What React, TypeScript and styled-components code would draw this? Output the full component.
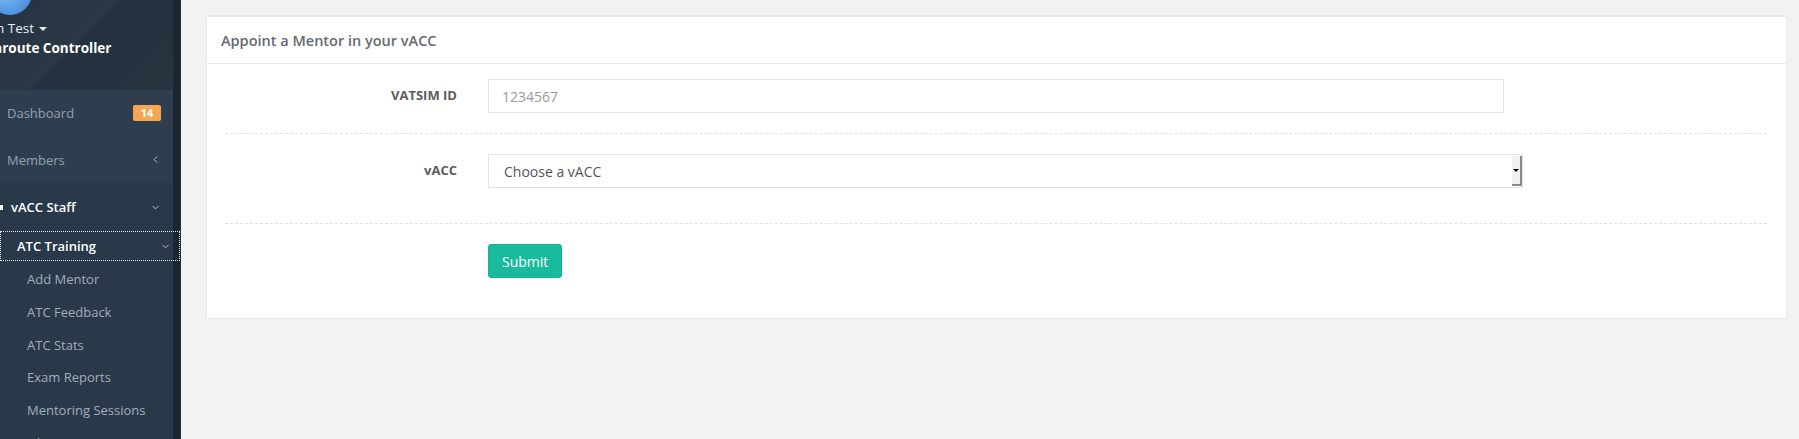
import React from "react";
import styled, { createGlobalStyle } from "styled-components";
import { FiChevronDown, FiChevronLeft } from "react-icons/fi";

const GlobalStyle = createGlobalStyle`
    html, body {
        margin: 0;
        padding: 0;
        background: #f2f2f2;
        font-family: "Open Sans", "Liberation Sans", sans-serif;
    }
    * {
        box-sizing: border-box;
    }
`;

const Page = styled.div`
    display: flex;
    height: 439px;
    overflow: hidden;
`;

const Sidebar = styled.aside`
    display: flex;
    width: 180px;
    flex-shrink: 0;
    background: #29394a;
`;

const Nav = styled.nav`
    width: 173px;
    flex-shrink: 0;
    position: relative;
    z-index: 1;
`;

const ScrollStrip = styled.div`
    width: 7px;
    background: #1b2631;
`;

const Profile = styled.div`
    height: 90px;
    position: relative;
    overflow: hidden;
    background: linear-gradient(135deg, #26333f 0%, #2a3846 45%, #243140 46%, #26343f 100%);
    color: #fff;
`;

const Avatar = styled.div`
    position: absolute;
    left: -12px;
    top: -29px;
    width: 44px;
    height: 44px;
    border-radius: 50%;
    background: radial-gradient(circle at 40% 40%, #8cc4f5 0%, #5a9ce6 55%, #3f7fd0 100%);
`;

const ProfileText = styled.div`
    padding-top: 19px;
    display: flex;
    flex-direction: column;
    gap: 1px;
`;

const UserName = styled.span`
    font-size: 13.5px;
    line-height: 19px;
    color: #e9edf1;
    margin-left: -4px;

    &::after {
        content: "";
        display: inline-block;
        margin-left: 5px;
        vertical-align: middle;
        border-left: 4px solid transparent;
        border-right: 4px solid transparent;
        border-top: 4px solid #e9edf1;
    }
`;

const UserRole = styled.span`
    font-size: 13.5px;
    line-height: 19px;
    font-weight: 700;
    margin-left: -6px;
`;

const MenuGroup = styled.div<{ $active?: boolean }>`
    background: ${(p) => (p.$active ? "#2f3e4f" : "transparent")};
`;

const MenuItem = styled.div<{ $height: number; $indent: number; $bright?: boolean; $weight?: number }>`
    height: ${(p) => p.$height}px;
    display: flex;
    align-items: center;
    justify-content: space-between;
    padding-left: ${(p) => p.$indent}px;
    padding-right: 12px;
    font-size: 13px;
    font-weight: ${(p) => p.$weight ?? 400};
    color: ${(p) => (p.$bright ? "#ffffff" : "#95a1ae")};
`;

const FocusedItem = styled(MenuItem)`
    outline: 1px dotted #e6e6e6;
    outline-offset: -1px;
    margin-right: -7px;
    padding-right: 9px;
`;

const SubMenu = styled.div`
    padding-top: 2px;
`;

const SubItem = styled.div`
    height: 32.7px;
    display: flex;
    align-items: center;
    padding-left: 27px;
    font-size: 13px;
    color: #a3adb8;
`;

const Label = styled.span`
    display: flex;
    align-items: center;
    gap: 6px;
`;

const IconStub = styled.span`
    display: inline-block;
    width: 3px;
    height: 5px;
    margin-left: -11px;
    margin-right: 2px;
    background: #fff;
`;

const Badge = styled.span`
    background: #f4a653;
    color: #fff;
    font-size: 11px;
    font-weight: 700;
    line-height: 16px;
    height: 16px;
    width: 28px;
    text-align: center;
    border-radius: 2px;
`;

const Chevron = styled.span`
    display: flex;
    color: #c4ccd4;
    font-size: 11px;
`;

const Main = styled.main`
    flex: 1;
    border-left: 1px solid #233140;
    padding: 15px 12px 0 25px;
`;

const Panel = styled.section`
    background: #fff;
    border: 1px solid #e6e9ed;
    border-top-width: 2px;
`;

const PanelHeader = styled.header`
    height: 47px;
    display: flex;
    align-items: center;
    padding-left: 14px;
    border-bottom: 1px solid #e6e9ed;
    font-size: 14.5px;
    font-weight: 600;
    color: #666a6e;
`;

const PanelBody = styled.div`
    padding: 0 19px 40px 18px;
`;

const FormRow = styled.div<{ $top: number; $bottom: number; $divider?: boolean }>`
    display: grid;
    grid-template-columns: 232px auto;
    column-gap: 31px;
    align-items: start;
    padding-top: ${(p) => p.$top}px;
    padding-bottom: ${(p) => p.$bottom}px;
    border-bottom: ${(p) => (p.$divider ? "1px dashed #e3e3e3" : "none")};
`;

const FieldLabel = styled.label`
    text-align: right;
    font-size: 13px;
    font-weight: 700;
    color: #5d5d5d;
    line-height: 34px;
    margin-top: -1px;
`;

const TextInput = styled.input`
    width: 1016px;
    height: 34px;
    border: 1px solid #e2e2e2;
    padding: 0 13px;
    font-family: inherit;
    font-size: 14px;
    color: #555;
    outline: none;

    &::placeholder {
        color: #9a9a9a;
    }
`;

const SelectWrap = styled.div`
    position: relative;
    width: 1035px;
    height: 34px;
`;

const Select = styled.select`
    width: 100%;
    height: 34px;
    appearance: none;
    border: 1px solid #e2e2e2;
    background: #fff;
    padding: 0 15px;
    font-family: inherit;
    font-size: 14px;
    color: #555;
    outline: none;
`;

const SelectArrow = styled.span`
    position: absolute;
    top: 2px;
    right: 1px;
    width: 10px;
    height: 30px;
    background: #f0f0f0;
    border-right: 2px solid #888;
    border-bottom: 2px solid #888;
    pointer-events: none;

    &::after {
        content: "";
        position: absolute;
        left: 1px;
        top: 13px;
        border-left: 3px solid transparent;
        border-right: 3px solid transparent;
        border-top: 3px solid #000;
    }
`;

const SubmitButton = styled.button`
    height: 34px;
    padding: 0 13px;
    border: 1px solid #17b394;
    border-radius: 3px;
    background: #1abb9c;
    color: #fff;
    font-family: inherit;
    font-size: 14px;
`;

const subItems = ["Add Mentor", "ATC Feedback", "ATC Stats", "Exam Reports", "Mentoring Sessions", "Observation Reports"];

const App = () => {
    return (
        <Page>
            <GlobalStyle />
            <Sidebar>
                <Nav>
                    <Profile>
                        <Avatar />
                        <ProfileText>
                            <UserName>h Test</UserName>
                            <UserRole>aroute Controller</UserRole>
                        </ProfileText>
                    </Profile>
                    <MenuGroup $active>
                        <MenuItem $height={46} $indent={7}>
                            <Label>Dashboard</Label>
                            <Badge>14</Badge>
                        </MenuItem>
                        <MenuItem $height={47} $indent={7}>
                            <Label>Members</Label>
                            <Chevron>
                                <FiChevronLeft />
                            </Chevron>
                        </MenuItem>
                    </MenuGroup>
                    <MenuItem $height={48} $indent={11} $bright $weight={600}>
                        <Label>
                            <IconStub />
                            vACC Staff
                        </Label>
                        <Chevron>
                            <FiChevronDown />
                        </Chevron>
                    </MenuItem>
                    <FocusedItem $height={30} $indent={17} $bright $weight={600}>
                        <Label>ATC Training</Label>
                        <Chevron>
                            <FiChevronDown />
                        </Chevron>
                    </FocusedItem>
                    <SubMenu>
                        {subItems.map((item) => (
                            <SubItem key={item}>{item}</SubItem>
                        ))}
                    </SubMenu>
                </Nav>
                <ScrollStrip />
            </Sidebar>
            <Main>
                <Panel>
                    <PanelHeader>Appoint a Mentor in your vACC</PanelHeader>
                    <PanelBody>
                        <FormRow $top={15} $bottom={20} $divider>
                            <FieldLabel>VATSIM ID</FieldLabel>
                            <TextInput placeholder="1234567" />
                        </FormRow>
                        <FormRow $top={20} $bottom={35} $divider>
                            <FieldLabel>vACC</FieldLabel>
                            <SelectWrap>
                                <Select defaultValue="">
                                    <option value="">Choose a vACC</option>
                                </Select>
                                <SelectArrow />
                            </SelectWrap>
                        </FormRow>
                        <FormRow $top={20} $bottom={0}>
                            <span />
                            <div>
                                <SubmitButton>Submit</SubmitButton>
                            </div>
                        </FormRow>
                    </PanelBody>
                </Panel>
            </Main>
        </Page>
    );
};

export default App;
